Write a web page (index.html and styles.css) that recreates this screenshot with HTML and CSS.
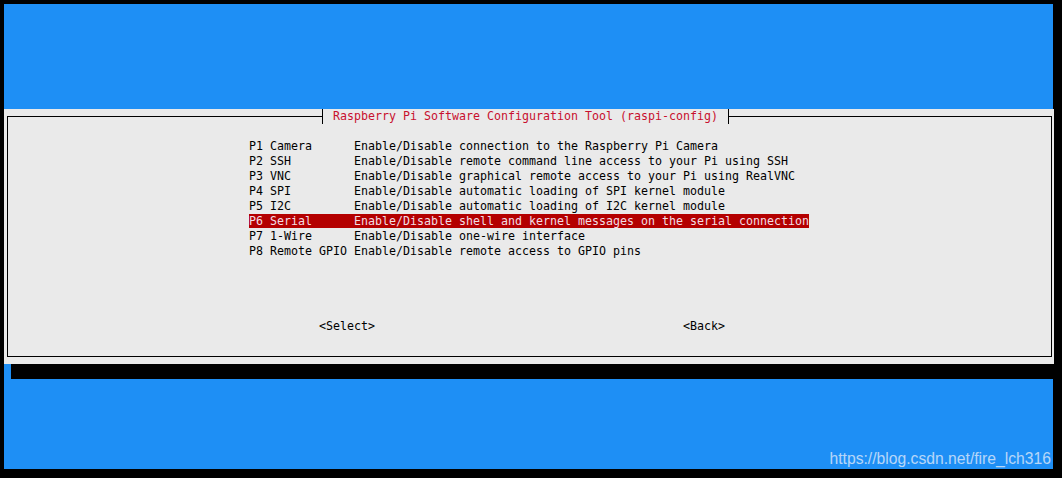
FILE: index.html
```html
<!DOCTYPE html>
<html>
<head>
<meta charset="utf-8">
<link rel="stylesheet" href="styles.css">
</head>
<body>
<div class="screen">
  <div class="top-space"></div>
  <div class="dialog">
    <div class="box">
      <div class="title">Raspberry Pi Software Configuration Tool (raspi-config)</div>
      <div class="menu">
        <div class="item">P1 Camera      Enable/Disable connection to the Raspberry Pi Camera</div>
        <div class="item">P2 SSH         Enable/Disable remote command line access to your Pi using SSH</div>
        <div class="item">P3 VNC         Enable/Disable graphical remote access to your Pi using RealVNC</div>
        <div class="item">P4 SPI         Enable/Disable automatic loading of SPI kernel module</div>
        <div class="item">P5 I2C         Enable/Disable automatic loading of I2C kernel module</div>
        <div class="item selected">P6 Serial      Enable/Disable shell and kernel messages on the serial connection</div>
        <div class="item">P7 1-Wire      Enable/Disable one-wire interface</div>
        <div class="item">P8 Remote GPIO Enable/Disable remote access to GPIO pins</div>
      </div>
      <div class="buttons">
        <span class="btn btn-select">&lt;Select&gt;</span>
        <span class="btn btn-back">&lt;Back&gt;</span>
      </div>
    </div>
  </div>
  <div class="shadow-row"><div class="shadow"></div></div>
  <div class="watermark">https://blog.csdn.net/fire_lch316</div>
</div>
</body>
</html>
```

FILE: styles.css
```css
html, body {
  margin: 0;
  padding: 0;
  background: #000;
  width: 1062px;
  height: 478px;
  overflow: hidden;
}

.screen {
  position: relative;
  margin: 4px 0 0 4px;
  width: 1049px;
  height: 465px;
  background: #1e8ff5;
  display: flex;
  flex-direction: column;
}

.top-space {
  height: 105px;
}

.dialog {
  background: #eaeaea;
  padding: 7px 2px 7px 3px;
  width: 1050px;
  box-sizing: border-box;
}

.box {
  position: relative;
  border: 1px solid #000;
  height: 241px;
  box-sizing: border-box;
  padding: 22px 0 0 241px;
  font-family: "DejaVu Sans Mono", monospace;
  font-size: 11.63px;
  line-height: 15px;
  color: #000;
}

.title {
  position: absolute;
  top: -8px;
  left: 314px;
  height: 15px;
  padding: 0 10px;
  background: #eaeaea;
  border-left: 1px solid #000;
  border-right: 1px solid #000;
  color: #c8102e;
  white-space: pre;
}

.menu {
  display: flex;
  flex-direction: column;
  align-items: flex-start;
}

.item {
  white-space: pre;
  height: 15px;
}

.item.selected {
  background: #b40000;
  color: #f2dde4;
  height: 14px;
  margin-bottom: 1px;
}

.buttons {
  display: flex;
  margin-top: 60px;
  height: 15px;
}

.btn {
  white-space: pre;
}

.btn-select {
  margin-left: 70px;
}

.btn-back {
  margin-left: 308px;
}

.shadow-row {
  height: 15px;
  display: flex;
}

.shadow {
  margin-left: 7px;
  flex: 1;
  background: #000;
}

.watermark {
  position: absolute;
  right: 2px;
  bottom: 2px;
  font-family: "Liberation Sans", Arial, sans-serif;
  font-size: 15.7px;
  line-height: 16px;
  color: rgba(235, 240, 250, 0.75);
}
```
